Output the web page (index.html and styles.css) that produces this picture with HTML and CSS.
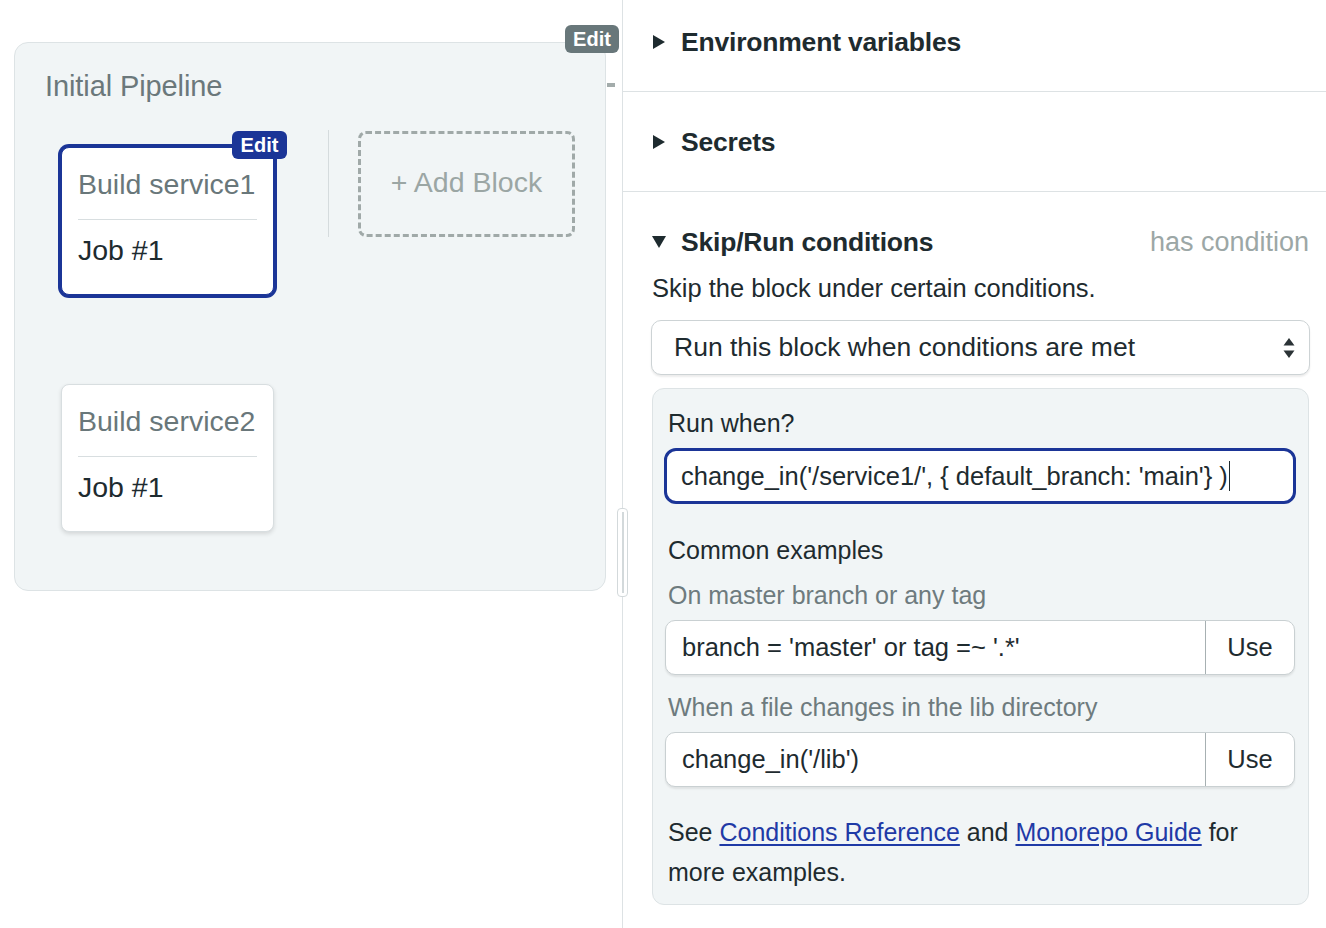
FILE: index.html
```html
<!DOCTYPE html>
<html lang="en">
<head>
<meta charset="utf-8">
<title>Workflow editor</title>
<link rel="stylesheet" href="styles.css">
</head>
<body>
<div class="app">
  <div class="canvas">
    <div class="pipeline">
      <span class="badge badge-gray pipeline-edit">Edit</span>
      <span class="stub"></span>
      <div class="pipeline-title">Initial Pipeline</div>
      <div class="stage">
        <div class="col-blocks">
          <div class="block selected">
            <span class="badge badge-blue block-edit">Edit</span>
            <div class="block-title">Build service1</div>
            <div class="block-job">Job #1</div>
          </div>
          <div class="block">
            <div class="block-title">Build service2</div>
            <div class="block-job">Job #1</div>
          </div>
        </div>
        <div class="col-sep"></div>
        <div class="add-block">+ Add Block</div>
      </div>
    </div>
    <div class="splitter"><span></span></div>
  </div>
  <div class="panel">
    <section class="section first">
      <div class="section-head"><span class="tri tri-right"></span><span class="section-title">Environment variables</span></div>
    </section>
    <section class="section">
      <div class="section-head"><span class="tri tri-right"></span><span class="section-title">Secrets</span></div>
    </section>
    <section class="section open">
      <div class="section-head">
        <span class="tri tri-down"></span><span class="section-title">Skip/Run conditions</span>
        <span class="section-status">has condition</span>
      </div>
      <p class="desc">Skip the block under certain conditions.</p>
      <div class="select">
        <span>Run this block when conditions are met</span>
        <svg class="select-arrows" width="12" height="22" viewBox="0 0 12 22"><path d="M6 1 L11.5 8.5 H0.5 Z" fill="#2b3336"/><path d="M6 21 L11.5 13.5 H0.5 Z" fill="#2b3336"/></svg>
      </div>
      <div class="cond-box">
        <div class="label">Run when?</div>
        <div class="input focused">change_in('/service1/', { default_branch: 'main'} )<span class="caret"></span></div>
        <div class="label label-examples">Common examples</div>
        <div class="label label-muted">On master branch or any tag</div>
        <div class="group">
          <div class="group-field">branch = 'master' or tag =~ '.*'</div>
          <div class="group-btn">Use</div>
        </div>
        <div class="label label-muted label-second">When a file changes in the lib directory</div>
        <div class="group">
          <div class="group-field">change_in('/lib')</div>
          <div class="group-btn">Use</div>
        </div>
        <p class="help">See <a href="#">Conditions Reference</a> and <a href="#">Monorepo Guide</a> for more examples.</p>
      </div>
    </section>
  </div>
</div>
</body>
</html>
```
FILE: styles.css
```css
* { box-sizing: border-box; }
html, body { margin: 0; padding: 0; background: #fff; }
body {
  font-family: "Liberation Sans", Arial, sans-serif;
  color: #1e2b2f;
  width: 1326px;
  height: 928px;
  overflow: hidden;
}
.app { display: flex; height: 928px; }

/* ---------- left canvas ---------- */
.canvas {
  position: relative;
  width: 623px;
  flex: none;
  border-right: 1px solid #dde2e4;
  padding: 42px 0 0 14px;
}
.pipeline {
  position: relative;
  width: 592px;
  height: 549px;
  background: #f1f5f6;
  border: 1px solid #dde3e5;
  border-radius: 14px;
  padding: 26px 30px 0 30px;
}
.badge {
  position: absolute;
  color: #fff;
  font-size: 20px;
  font-weight: 700;
  line-height: 28px;
  padding: 0 8px;
  border-radius: 6px;
}
.badge-gray { background: #68777a; }
.badge-blue { background: #1b3597; }
.pipeline-edit { top: -18px; right: -14px; height: 28px; width: 54px; text-align: center; padding: 0; }
.stub {
  position: absolute;
  right: -10px;
  top: 40px;
  width: 8px;
  height: 4px;
  background: #a3acab;
}
.pipeline-title {
  font-size: 29px;
  line-height: 34px;
  color: #6b787b;
  letter-spacing: -0.1px;
}
.stage {
  display: flex;
  align-items: flex-start;
  margin-top: 27px;
  padding-left: 16px;
}
.col-blocks {
  display: flex;
  flex-direction: column;
  gap: 89px;
  padding-top: 17px;
  width: 213px;
}
.block {
  position: relative;
  background: #fff;
  border: 1px solid #d8dee0;
  border-radius: 8px;
  height: 148px;
  padding: 19px 16px 0 16px;
  box-shadow: 0 2px 4px rgba(0, 0, 0, 0.12);
}
.block.selected {
  border-color: #1b3597;
  box-shadow: 0 0 0 3px #1b3597;
}
.block-edit { top: -17px; right: -14px; height: 28px; width: 55px; text-align: center; padding: 0; }
.block-title {
  font-size: 28.5px;
  line-height: 34px;
  color: #69777a;
  padding-bottom: 18px;
  border-bottom: 1px solid #d8dee0;
  white-space: nowrap;
}
.block-job {
  font-size: 28.5px;
  line-height: 34px;
  color: #1e2b2f;
  margin-top: 13px;
}
.col-sep {
  width: 1px;
  height: 107px;
  background: #d5dbdd;
  margin-left: 54px;
}
.add-block {
  width: 217px;
  height: 106px;
  margin-left: 29px;
  margin-top: 1px;
  border: 3px dashed #a0a9a8;
  border-radius: 8px;
  display: flex;
  align-items: center;
  justify-content: center;
  font-family: "Liberation Sans", Helvetica, Arial, sans-serif;
  font-size: 28.5px;
  color: #9ba6a4;
  padding-bottom: 4px;
}
.splitter {
  position: absolute;
  right: -6px;
  top: 508px;
  width: 11px;
  height: 89px;
  background: #fff;
  border: 1px solid #d3d9db;
  border-radius: 4px;
  display: flex;
  justify-content: center;
  align-items: center;
}
.splitter span {
  display: block;
  width: 2px;
  height: 81px;
  background: #d3d9db;
}

/* ---------- right panel ---------- */
.panel {
  flex: 1;
  min-width: 0;
}
.section {
  border-bottom: 1px solid #dde2e4;
  padding: 34px 17px 33px 29px;
}
.section.first { padding-top: 26px; }
.section.open { border-bottom: none; padding-bottom: 0; }
.section-head {
  display: flex;
  align-items: center;
  height: 32px;
}
.tri { display: block; width: 0; height: 0; margin-left: 1px; }
.tri-right {
  border-top: 7px solid transparent;
  border-bottom: 7px solid transparent;
  border-left: 12px solid #1e2b2f;
  margin-right: 16px;
}
.tri-down {
  border-left: 7px solid transparent;
  border-right: 7px solid transparent;
  border-top: 12px solid #1e2b2f;
  margin-right: 15px;
  margin-left: 0;
}
.section-title {
  font-size: 26.5px;
  font-weight: 700;
  color: #1e2b2f;
  letter-spacing: -0.2px;
}
.section-status {
  margin-left: auto;
  font-size: 27px;
  color: #9ca7a6;
}
.desc {
  margin: 14px 0 0 0;
  font-size: 25.5px;
  line-height: 32px;
}
.select {
  margin: 16px -1px 0 -1px;
  height: 55px;
  border: 1px solid #cdd3d5;
  border-radius: 10px;
  background: #fff;
  box-shadow: 0 2px 2px rgba(0, 0, 0, 0.08);
  display: flex;
  align-items: center;
  padding: 0 14px 0 22px;
  font-size: 26.5px;
  white-space: nowrap;
}
.select-arrows { margin-left: auto; }
.cond-box {
  margin-top: 13px;
  background: #f1f5f6;
  border: 1px solid #dde3e5;
  border-radius: 12px;
  padding: 18px 13px 12px 12px;
}
.label {
  font-size: 25px;
  line-height: 32px;
  padding-left: 3px;
  white-space: nowrap;
}
.label-examples { margin-top: 30px; }
.label-muted { color: #6e7b7e; margin-top: 13px; }
.label-second { margin-top: 16px; }
.input {
  margin-top: 9px;
  height: 56px;
  background: #fff;
  border-radius: 12px;
  display: flex;
  align-items: center;
  padding-left: 14px;
  font-size: 25.5px;
  white-space: nowrap;
}
.input.focused {
  border: 3px solid #1b3597;
  margin-left: -1px;
  margin-right: -1px;
}
.caret {
  display: inline-block;
  width: 1.5px;
  height: 30px;
  background: #1e2b2f;
  margin-left: 1px;
}
.group {
  margin-top: 9px;
  height: 55px;
  display: flex;
  background: #fff;
  border: 1px solid #c9d0d2;
  border-radius: 10px;
  box-shadow: 0 2px 2px rgba(0, 0, 0, 0.08);
  overflow: hidden;
}
.group-field {
  flex: 1;
  display: flex;
  align-items: center;
  padding-left: 16px;
  font-size: 25.5px;
  white-space: nowrap;
}
.group-btn {
  width: 89px;
  border-left: 1px solid #a7b0b2;
  display: flex;
  align-items: center;
  justify-content: center;
  font-size: 25.5px;
}
.help {
  margin: 25px 0 0 0;
  padding-left: 3px;
  font-size: 25px;
  line-height: 40px;
}
.help a { color: #1f3aa6; text-decoration: underline; text-underline-offset: 3px; }
```
